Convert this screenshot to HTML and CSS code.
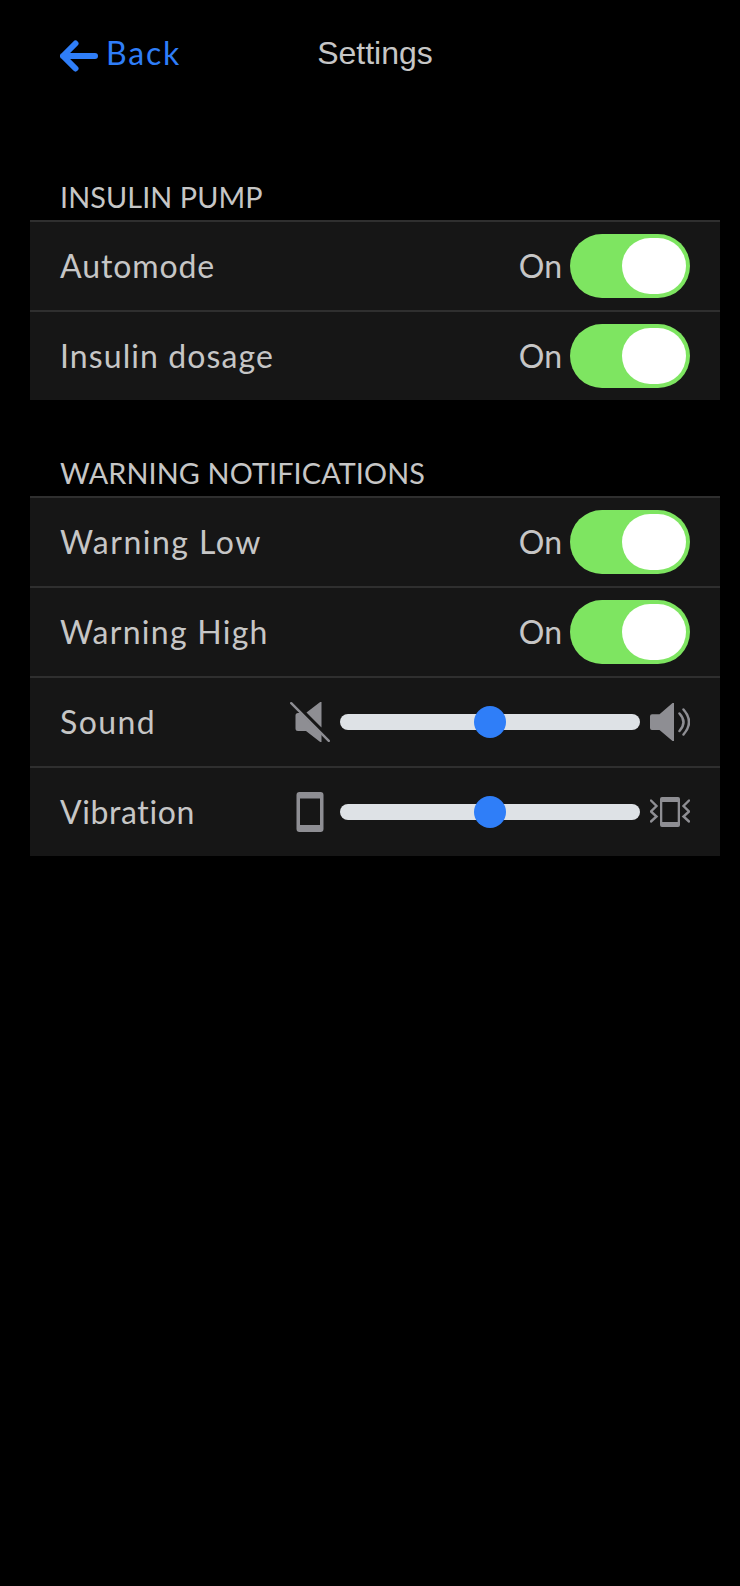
FILE: index.html
```html
<!DOCTYPE html>
<html lang="en">
<head>
<meta charset="utf-8">
<title>Settings</title>
<link rel="stylesheet" href="styles.css">
</head>
<body>
<header class="topbar">
  <a class="back">
    <svg class="back-icon" viewBox="0 0 38 32"><path d="M15.500 3.500L3 16l12.500 12.500M3 16h32" fill="none" stroke="currentColor" stroke-width="6" stroke-linecap="round" stroke-linejoin="round"/></svg>
    <span class="t-back">Back</span>
  </a>
  <h1 class="title">Settings</h1>
</header>
<main class="content">
  <section class="group">
    <h2 class="heading t-pump">INSULIN PUMP</h2>
    <div class="row"><span class="label t-auto">Automode</span><span class="state">On</span><span class="toggle"><span class="knob"></span></span></div>
    <div class="row"><span class="label t-dosage">Insulin dosage</span><span class="state">On</span><span class="toggle"><span class="knob"></span></span></div>
  </section>
  <section class="group">
    <h2 class="heading t-notif">WARNING NOTIFICATIONS</h2>
    <div class="row"><span class="label t-low">Warning Low</span><span class="state">On</span><span class="toggle"><span class="knob"></span></span></div>
    <div class="row"><span class="label t-high">Warning High</span><span class="state">On</span><span class="toggle"><span class="knob"></span></span></div>
    <div class="row">
      <span class="label t-sound">Sound</span>
      <svg class="icon" viewBox="0 0 40 40"><path fill="currentColor" d="M16.500 10.500L30.200 0H31.500V25.500zM8 11h2L31.500 32.500V40h-1.300L16 29H8q-2.500 0-2.500-2.500v-13Q5.500 11 8 11z"/><path d="M1.200 1.200L38.800 38.800" stroke="currentColor" stroke-width="2.400" stroke-linecap="round"/></svg>
      <span class="slider"><span class="thumb"></span></span>
      <svg class="icon" viewBox="0 0 40 40"><path fill="currentColor" d="M2 12.200h7.500L22.500 1H24V39H22.500L9.500 28H2q-2 0-2-2V14.200q0-2 2-2z"/><path d="M29.500 11.500Q37.500 20 29.500 29M33.500 7.500Q44.500 20 33.500 32.500" fill="none" stroke="currentColor" stroke-width="2.500" stroke-linecap="round"/></svg>
    </div>
    <div class="row">
      <span class="label t-vib">Vibration</span>
      <svg class="icon" viewBox="0 0 40 40"><path fill="currentColor" fill-rule="evenodd" d="M9.500 0h21q3 0 3 3v34q0 3-3 3h-21q-3 0-3-3V3q0-3 3-3zM10 6.500v26.500h20V6.500z"/></svg>
      <span class="slider"><span class="thumb"></span></span>
      <svg class="icon" viewBox="0 0 40 40"><path fill="currentColor" fill-rule="evenodd" d="M12 5h16q2 0 2 2v26q0 2-2 2H12q-2 0-2-2V7q0-2 2-2zM12.300 10v20h15.400V10z"/><path d="M1 8.500L6.500 14 1 19.500 6.500 24.500 1 29.500M39 8.500L33.500 14 39 19.500 33.500 24.500 39 29.500" fill="none" stroke="currentColor" stroke-width="2.400" stroke-linecap="round"/></svg>
    </div>
  </section>
</main>
</body>
</html>
```
FILE: styles.css
```css
* { box-sizing: border-box; }
body { margin: 0; min-height: 1586px; background: #000; color: #c6c6c6; font-family: Lato, sans-serif; font-size: 32px; line-height: 40px; font-variant-ligatures: none; }
.topbar { display: grid; grid-template-columns: 1fr auto 1fr; height: 174px; padding: 32px 50px 0 60px; align-items: start; }
.back { display: flex; gap: 8px; color: #2f7ef8; }
.back-icon { width: 38px; height: 32px; margin-top: 8px; }
.title { margin: 0; font: 400 32px/42px "Liberation Sans", sans-serif; }
.content { padding: 0 20px 0 30px; }
.group { margin-bottom: 50px; }
.heading { margin: 0; padding-left: 30px; font-size: 28.8px; font-weight: 400; line-height: 46px; }
.row { display: flex; align-items: center; height: 90px; padding: 0 30px; border-top: 2px solid #2f2f2f; background: #161616; }
.label { margin-right: auto; white-space: nowrap; }
.state { margin-right: 8px; }
.toggle { display: flex; justify-content: flex-end; width: 120px; height: 64px; padding: 4px; border-radius: 32px; background: #7ee561; }
.knob { width: 64px; height: 56px; border-radius: 28px; background: #fff; }
.icon { width: 40px; height: 40px; color: #8e8e93; }
.slider { display: flex; align-items: center; justify-content: center; width: 300px; height: 16px; margin: 0 10px; border-radius: 8px; background: #dee2e6; }
.thumb { width: 32px; height: 32px; flex: none; border-radius: 50%; background: #2f7ef8; }

/* Per-label tracking */
.t-back { letter-spacing: 1.8px; padding-top: 1px; }
.t-pump { letter-spacing: .1px; }
.t-notif { letter-spacing: .12px; }
.t-auto { letter-spacing: .9px; }
.t-dosage { letter-spacing: 1.1px; }
.t-low { letter-spacing: 1.5px; }
.t-high { letter-spacing: 1.27px; }
.t-sound { letter-spacing: 1.4px; }
.t-vib { letter-spacing: .6px; }
```
